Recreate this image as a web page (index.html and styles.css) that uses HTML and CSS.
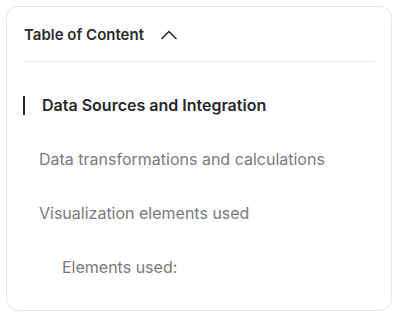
FILE: index.html
```html
<html>
	<head>
		<link rel="stylesheet" href="styles.css">
	</head>
	<body>
		<div class="toc">
			<div class="toc-header">
				<span class="toc-title">Table of Content</span>
				<svg class="chevron" width="16" height="10" viewBox="0 0 16 10">
					<path d="M1 8.5 L8 1.5 L15 8.5" fill="none" stroke="#2b2b2b" stroke-width="1.6" stroke-linecap="round" stroke-linejoin="round"/>
				</svg>
			</div>
			<ul class="toc-list">
				<li class="toc-item active"><span class="bar"></span>Data Sources and Integration</li>
				<li class="toc-item">Data transformations and calculations</li>
				<li class="toc-item">Visualization elements used</li>
				<li class="toc-item sub">Elements used:</li>
			</ul>
		</div>
	</body>
</html>
```

FILE: styles.css
```css
* {
  margin: 0;
  padding: 0;
  box-sizing: border-box;
}

body {
  background-color: #fff;
  font-family: Inter, "Noto Sans", sans-serif;
  color: #2b2b2b;
}

.toc {
  margin: 6px;
  width: 386px;
  height: 305px;
  border: 1px solid #e6e6e6;
  border-radius: 12px;
  padding: 0 16px;
}

.toc-header {
  height: 55px;
  display: flex;
  align-items: center;
  gap: 17px;
  border-bottom: 1px solid #ebebeb;
  padding-left: 1px;
}

.toc-title {
  font-size: 15px;
  font-weight: 600;
  color: #2b2b2b;
}

.chevron {
  margin-top: 1px;
}

.toc-list {
  list-style: none;
  padding-top: 16px;
}

.toc-item {
  font-size: 16px;
  line-height: 22px;
  padding: 16px 0 16px 16px;
  color: #7a7a7a;
}

.toc-item.active {
  display: flex;
  align-items: center;
  padding-left: 0;
  font-weight: 600;
  color: #25272b;
}

.toc-item .bar {
  width: 2px;
  height: 19px;
  background-color: #25272b;
  margin-right: 17px;
}

.toc-item.sub {
  padding-left: 39px;
}
```
